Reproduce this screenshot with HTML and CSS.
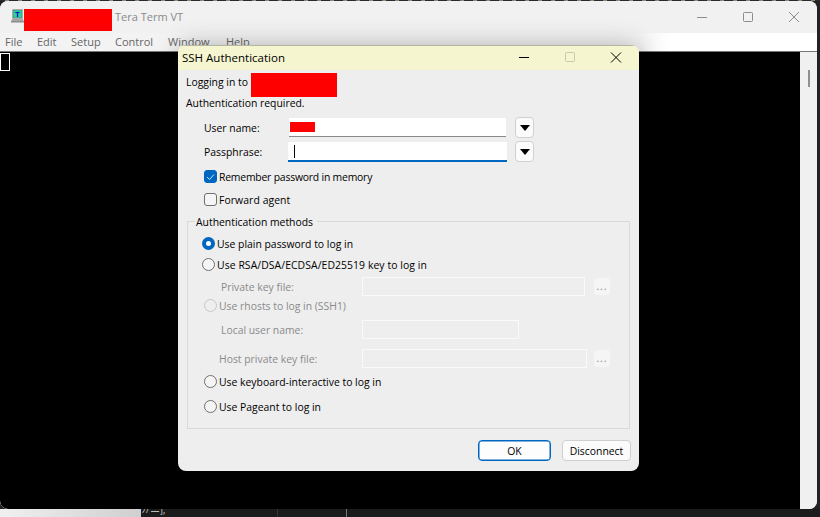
FILE: index.html
```html
<!DOCTYPE html>
<html lang="en">
<head>
<meta charset="utf-8">
<title>Tera Term VT</title>
<link rel="stylesheet" href="styles.css">
</head>
<body>
<div class="desktop">
  <div class="desk-top"></div>
  <div class="desk-bottom"><div class="desk-light"></div><div class="desk-dark"><span class="code">ﾌ/ニ];</span></div></div>

  <section class="vt">
    <header class="vt-title">
      <svg class="vt-icon" width="14" height="14" viewBox="0 0 14 14"><rect x="2" y="0" width="11" height="10" fill="#c4c4c4"/><rect x="3" y="1" width="9" height="8" fill="#2ecf9a" stroke="#4a4a4a" stroke-width="0.4"/><text x="7.5" y="8" font-size="8" font-weight="700" text-anchor="middle" fill="#0000d0" font-family="Liberation Sans, sans-serif">T</text><path d="M2 10h11l1 3H1z" fill="#a4a4a4"/><path d="M1 13h13" stroke="#707070" stroke-width="0.8"/></svg>
      <div class="redact redact-title"></div>
      <span class="vt-name">Tera Term VT</span>
      <div class="caps">
        <svg class="cap" width="46" height="32" viewBox="0 0 46 32"><path d="M18 16.5h10" stroke="#8c8c8c"/></svg>
        <svg class="cap" width="46" height="32" viewBox="0 0 46 32"><rect x="18.5" y="11.5" width="9" height="9" rx="1" fill="none" stroke="#8c8c8c"/></svg>
        <svg class="cap" width="46" height="32" viewBox="0 0 46 32"><path d="M18 11l10 10M28 11L18 21" stroke="#8c8c8c"/></svg>
      </div>
    </header>
    <nav class="vt-menu">
      <span class="m-file">File</span><span class="m-edit">Edit</span><span class="m-setup">Setup</span><span class="m-ctrl">Control</span><span class="m-win">Window</span><span class="m-help">Help</span>
    </nav>
    <div class="vt-body">
      <div class="screen"><div class="cursor"></div></div>
      <div class="scroll"><div class="thumb"></div></div>
    </div>
  </section>

  <section class="dlg">
    <header class="dlg-title">
      <span class="dlg-name">SSH Authentication</span>
      <div class="caps">
        <svg class="cap" width="46" height="25" viewBox="0 0 46 25"><path d="M18 12.5h10" stroke="#000"/></svg>
        <svg class="cap" width="46" height="25" viewBox="0 0 46 25"><rect x="18.5" y="7.5" width="9" height="9" rx="1" fill="none" stroke="#c8c8b0"/></svg>
        <svg class="cap" width="46" height="25" viewBox="0 0 46 25"><path d="M18 7.5l10 10M28 7.5l-10 10" stroke="#000"/></svg>
      </div>
    </header>
    <div class="info login"><span class="login-text">Logging in to</span><div class="redact redact-host"></div></div>
    <div class="info required"><span>Authentication required.</span></div>

    <div class="field user">
      <label class="flabel">User name:</label>
      <div class="input input-user"><div class="redact redact-user"></div></div>
      <button class="drop"><i></i></button>
    </div>
    <div class="field pass">
      <label class="flabel">Passphrase:</label>
      <div class="input input-pass"><div class="caret"></div></div>
      <button class="drop"><i></i></button>
    </div>

    <div class="opt opt-mem">
      <span class="check on"><svg width="9" height="8" viewBox="0 0 9 8"><path d="M1 4l2.5 2.5L8 1.5" fill="none" stroke="#cfe4f7" stroke-width="1"/></svg></span>
      <span class="tight">Remember password in memory</span>
    </div>
    <div class="opt opt-fwd"><span class="check"></span><span class="wide">Forward agent</span></div>

    <div class="group">
      <div class="legend">Authentication methods</div>
      <div class="opt r-plain"><span class="radio on"></span><span>Use plain password to log in</span></div>
      <div class="opt r-rsa"><span class="radio"></span><span class="wide">Use RSA/DSA/ECDSA/ED25519 key to log in</span></div>
      <div class="sub s-key"><span class="slabel">Private key file:</span><div class="dis w223"></div><div class="more">...</div></div>
      <div class="opt r-rhosts off"><span class="radio"></span><span>Use rhosts to log in (SSH1)</span></div>
      <div class="sub s-user"><span class="slabel">Local user name:</span><div class="dis w157"></div></div>
      <div class="sub s-host"><span class="slabel hostl">Host private key file:</span><div class="dis w225"></div><div class="more m7">...</div></div>
      <div class="opt r-kbd"><span class="radio"></span><span>Use keyboard-interactive to log in</span></div>
      <div class="opt r-pag"><span class="radio"></span><span>Use Pageant to log in</span></div>
    </div>

    <footer class="dlg-foot">
      <button class="btn ok">OK</button>
      <button class="btn">Disconnect</button>
    </footer>
  </section>
</div>
</body>
</html>
```
FILE: styles.css
```css
* { box-sizing: border-box; }
html, body { margin: 0; padding: 0; }
body { width: 820px; height: 517px; overflow: hidden; font-family: "Open Sans", "Roboto", sans-serif; font-size: 10.4px; color: #000; background: #222; }
.desktop { position: relative; width: 820px; height: 517px; overflow: hidden; background: #222; }
.desk-top { height: 1px; background: repeating-linear-gradient(90deg, #2a2a2a 0 5px, #7a7f90 5px 7px, #a08a70 7px 9px, #2a2a2a 9px 13px); }
.desk-bottom { position: absolute; left: 0; right: 0; bottom: 0; height: 8px; display: flex; }
.desk-light { width: 141px; background: linear-gradient(90deg, #f0f0f0, #cfcfcf); }
.desk-dark { flex: 1; color: #bbb; font-size: 10px; line-height: 10px; background: linear-gradient(90deg, transparent 136px, #333 136px 137px, transparent 137px 205px, #777 205px 206px, transparent 206px), #1b1b1b; }
.code { display: block; margin-top: -5px; }
.tight { letter-spacing: -0.2px; }
.wide { letter-spacing: 0.08px; }

.vt { position: absolute; left: 0; top: 1px; width: 817px; height: 508px; display: flex; flex-direction: column; border-radius: 8px; overflow: hidden; background: #f0f0f0; }
.vt-title { height: 32px; display: flex; align-items: center; background: #f1f1f1; position: relative; }
.vt-icon { margin-left: 10px; margin-top: -2px; flex: none; }
.redact { background: #f00; }
.redact-title { width: 88px; height: 22px; margin-top: 6px; }
.vt-name { margin-left: 3px; color: #8a8a8a; margin-top: -1px; font-size: 11px; }
.caps { margin-left: auto; display: flex; }
.cap { display: block; flex: none; }
.vt-menu { height: 18px; position: relative; font-size: 11px; background: linear-gradient(90deg, #f3f3f3 0, #f3f3f3 640px, #fff 670px); color: #666; }
.vt-menu span { position: absolute; top: 0; line-height: 17px; }
.m-file { left: 5px; }
.m-edit { left: 37px; }
.m-setup { left: 71px; }
.m-ctrl { left: 115px; }
.m-win { left: 168px; }
.m-help { left: 226px; }
.vt-body { flex: 1; display: flex; min-height: 0; border-top: 1px solid #777; }
.screen { flex: 1; background: #000; border-bottom-left-radius: 8px; padding-top: 1px; }
.cursor { width: 10px; height: 18px; border: 1px solid #fff; }
.scroll { width: 17px; background: #f0f0f0; }
.thumb { width: 2px; height: 17px; margin: 18px 0 0 8px; background: #8f8f8f; }

.dlg { position: absolute; left: 178px; top: 45px; width: 461px; height: 426px; background: #eeeeee; border-radius: 8px; box-shadow: 0 0 24px rgba(0,0,0,.28); display: flex; flex-direction: column; overflow: hidden; }
.dlg-title { height: 25px; flex: none; display: flex; align-items: center; background: #f5f5d0; box-shadow: inset 0 1px 0 #b5b5a5; }
.dlg-name { margin-left: 4px; font-size: 11.5px; margin-top: -1px; }
.dlg-title .caps { margin-top: -1px; }
.info { display: flex; align-items: center; margin-left: 8px; flex: none; }
.login { height: 24px; margin-top: 3px; }
.login-text { width: 65px; margin-top: -6px; white-space: nowrap; }
.required { height: 12px; }
.redact-host { width: 86px; height: 24px; }
.field { display: flex; align-items: center; height: 21px; flex: none; margin-left: 26px; }
.user { margin-top: 8px; }
.pass { margin-top: 3px; }
.flabel { width: 85px; flex: none; }
.pass .flabel { width: 84px; }
.input { background: #fff; height: 19px; flex: none; position: relative; }
.input-user { width: 217px; border-bottom: 1px solid #8a8a8a; padding: 4px 1px; }
.input-pass { width: 219px; height: 20px; border-bottom: 2px solid #0067c0; padding: 3px 6px; }
.redact-user { width: 25px; height: 10px; }
.caret { width: 1px; height: 13px; background: #000; }
.drop { width: 19px; height: 21px; margin-left: 9px; padding: 0; flex: none; background: #fbfbfb; border: 1px solid #d0d0d0; border-radius: 4px; display: flex; align-items: center; justify-content: center; }
.pass .drop { margin-left: 8px; }
.drop i { display: block; width: 0; height: 0; border-left: 5px solid transparent; border-right: 5px solid transparent; border-top: 6px solid #000; }

.opt { display: flex; align-items: center; height: 13px; flex: none; gap: 2px; white-space: nowrap; }
.opt-mem { margin: 8px 0 0 26px; }
.opt-fwd { margin: 10px 0 0 26px; }
.check { width: 13px; height: 13px; flex: none; border: 1px solid #6f6f6f; border-radius: 3px; background: #f5f5f5; display: flex; align-items: center; justify-content: center; }
.check.on { background: #0067c0; border-color: #0067c0; }
.radio { width: 13px; height: 13px; flex: none; border: 1px solid #6f6f6f; border-radius: 50%; background: #f5f5f5; }
.radio.on { background: #fff; border: 4px solid #0067c0; }

.group { position: relative; margin: 15px 0 0 9px; width: 443px; height: 208px; flex: none; border: 1px solid #d9d9d9; }
.legend { position: absolute; left: 7px; top: -7px; padding: 0 4px 0 1px; line-height: 14px; background: #eeeeee; white-space: nowrap; }
.r-plain { margin: 15px 0 0 14px; }
.r-rsa { margin: 8px 0 0 14px; }
.r-rhosts { margin: 3px 0 0 16px; }
.r-kbd { margin: 7px 0 0 16px; }
.r-pag { margin: 12px 0 0 16px; }
.off { color: #8a8a8a; }
.off .radio { border-color: #c8c8c8; background: #eeeeee; }
.sub { display: flex; align-items: center; height: 19px; color: #8a8a8a; }
.s-key { margin-top: 6px; }
.s-user { margin-top: 8px; }
.s-host { margin-top: 10px; }
.slabel { width: 141px; margin-left: 33px; flex: none; white-space: nowrap; }
.hostl { width: 143px; margin-left: 31px; }
.dis { height: 19px; flex: none; border: 1px solid #fafafa; background: #eeeeee; }
.w223 { width: 223px; }
.w157 { width: 157px; }
.w225 { width: 225px; }
.more { width: 16px; height: 17px; margin-left: 9px; flex: none; background: #f5f5f5; border-radius: 3px; color: #8a8a8a; text-align: center; line-height: 17px; letter-spacing: 1px; }
.m7 { margin-left: 7px; }

.dlg-foot { display: flex; justify-content: flex-end; gap: 11px; margin-top: 11px; padding-right: 8px; flex: none; }
.btn { height: 21px; width: 69px; padding: 0; background: #fbfbfb; border: 1px solid #cfcfcf; border-radius: 4px; font: inherit; color: #000; }
.ok { width: 73px; border: 1px solid #0067c0; background: #fdfdfd; box-shadow: inset 0 0 0 0.5px #0067c0; }
```
